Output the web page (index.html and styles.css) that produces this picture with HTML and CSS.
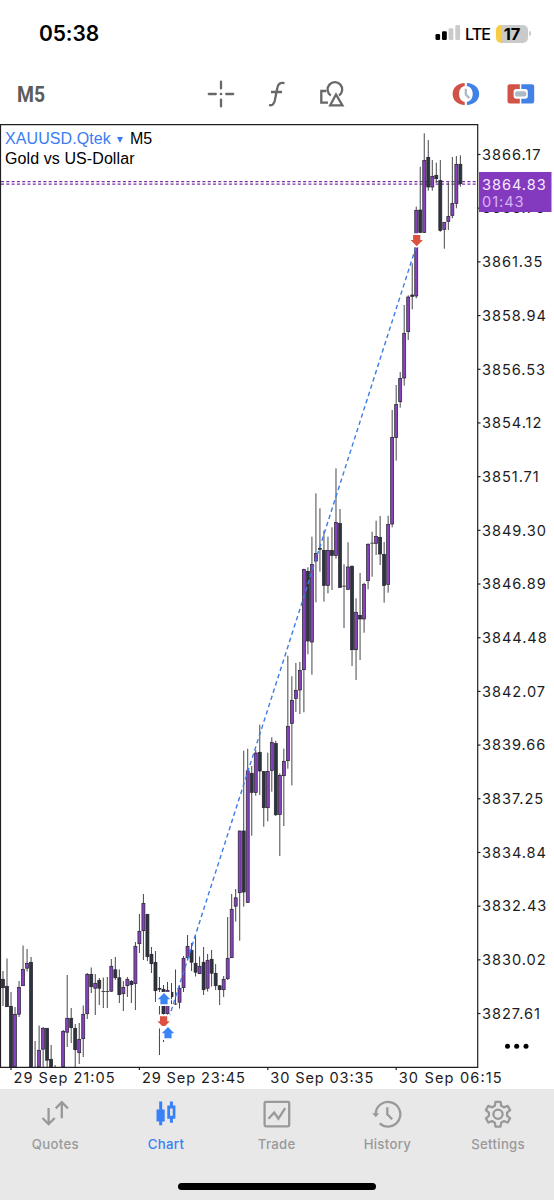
FILE: index.html
```html
<!DOCTYPE html>
<html lang="en">
<head>
<meta charset="utf-8">
<title>XAUUSD M5 chart</title>
<link rel="stylesheet" href="styles.css">
</head>
<body>
<div class="screen">
  <header class="status">
    <div class="clock">05:38</div>
    <div class="indicators">
      <svg class="signal" width="26" height="16" viewBox="0 0 26 16">
        <rect x="0.5" y="9" width="4.6" height="6" rx="1.3"/>
        <rect x="7" y="6.3" width="4.8" height="8.7" rx="1.3"/>
        <rect class="weak" x="13.6" y="3.3" width="4.8" height="11.7" rx="1.3"/>
        <rect class="weak" x="20.3" y="0" width="4.8" height="15" rx="1.3"/>
      </svg>
      <span class="network">LTE</span>
      <span class="battery"><b>17</b></span><i class="battery-tip"></i>
    </div>
  </header>

  <div class="toolbar">
    <div class="timeframe">M5</div>
    <svg class="tool cross" width="28" height="28" viewBox="0 0 28 28">
      <path d="M14 1.6V8.4M14 19.6V26.4M1.8 14H8.8M19.2 14H26.2" stroke-linecap="round"/>
      <circle class="dot" cx="14" cy="14" r="1.3"/>
    </svg>
    <svg class="tool func" width="20" height="28" viewBox="0 0 20 28">
      <path d="M2 25C5.5 26 7 24 7.8 20.5L10.3 8C11 4 13 2.2 17.5 3.2M4 12H15"/>
    </svg>
    <svg class="tool shapes" width="28" height="28" viewBox="0 0 28 28">
      <path d="M8.3 11H3.3V22.7H10M12.8 15.5A7.3 7.3 0 1 1 21 15.5M18 14.5L12.2 25.3H24.4Z"/>
    </svg>
    <svg class="tool session" width="28" height="24" viewBox="0 0 28 24">
      <path class="red" d="M12.7 1V4.1C8.5 5 7.1 8.5 7.1 12S8.5 19 12.7 19.9V23C5.5 22.6.6 18.4.6 12S5.5 1.4 12.7 1Z"/>
      <path class="blue" d="M14.9 1V4.1C19.1 5 20.7 8.5 20.7 12S19.1 19 14.9 19.9V23C22 22.6 27.2 18.4 27.2 12S22 1.4 14.9 1Z"/>
      <path class="hands" d="M13.8 6.8V12.5L17.4 16.1"/>
    </svg>
    <svg class="tool trade-toggle" width="28" height="20" viewBox="0 0 28 20">
      <path class="red" d="M2.8.2H12.8V5H9.3Q6.6 5 6.6 7.7V12Q6.6 14.7 9.3 14.7H12.8V19.5H2.8Q.5 19.5.5 17.2V2.5Q.5.2 2.8.2Z"/>
      <path class="blue" d="M14.3.2H25Q27.2.2 27.2 2.5V17.2Q27.2 19.5 25 19.5H14.3V14.7H18.1Q20.8 14.7 20.8 12V7.7Q20.8 5 18.1 5H14.3Z"/>
      <rect class="pill" x="8" y="7.2" width="11.4" height="5.3" rx="2.6"/>
    </svg>
  </div>

  <main class="chart">
    <svg id="plot" width="554" height="965" viewBox="0 124 554 965"></svg>
    <div class="heading">
      <div><span class="symbol">XAUUSD.Qtek</span><i class="caret"></i>M5</div>
      <div>Gold vs US-Dollar</div>
    </div>
  </main>

  <nav class="tabs">
    <div class="tab">
      <svg width="30" height="30" viewBox="0 0 30 30"><path d="M8.6 8V24M2.5 18L8.6 24.2L14.7 18M21.8 18.2V2.4M15.7 8.4L21.8 2.2L27.9 8.4"/></svg>
      <span>Quotes</span>
    </div>
    <div class="tab active">
      <svg width="30" height="30" viewBox="0 0 30 30"><path class="fill" d="M8.2 1.5H11.2V9.5H13.7V21.5H11.2V25.3H8.2V21.5H5.5V9.5H8.2ZM18.9 1.5H21.9V5.5H24.4V18.7H21.9V22.8H18.9V18.7H16.3V5.5H18.9ZM19.1 8.5V15.8H21.7V8.5Z"/></svg>
      <span>Chart</span>
    </div>
    <div class="tab">
      <svg width="30" height="30" viewBox="0 0 30 30"><rect x="2.6" y="1.9" width="24.6" height="24.4" rx="1.2"/><path d="M6.4 18.7L12.2 12.6L16.4 18.6L23.2 8.2"/></svg>
      <span>Trade</span>
    </div>
    <div class="tab">
      <svg width="30" height="30" viewBox="0 0 30 30"><path d="M3.7 14A12.3 12.3 0 1 1 7.7 23.3M15.3 7.3V14.3L20.2 19.3"/><path class="fill" d="M.2 13.3H7.2L3.8 17.3Z"/></svg>
      <span>History</span>
    </div>
    <div class="tab">
      <svg width="30" height="30" viewBox="0 0 30 30"><path stroke-linejoin="round" d="M12.5 1.8H17.5L18.2 5.7L20.9 7.3L24.7 5.9L27.1 10.1L24.1 12.6V15.8L27.1 18.3L24.7 22.5L20.9 21.1L18.2 22.7L17.5 26.6H12.5L11.8 22.7L9.1 21.1L5.3 22.5L2.9 18.3L5.9 15.8V12.6L2.9 10.1L5.3 5.9L9.1 7.3L11.8 5.7Z"/><circle cx="15" cy="14.2" r="4.6"/></svg>
      <span>Settings</span>
    </div>
  </nav>
  <footer class="home"><i></i></footer>
</div>
<script src="chart.js"></script>
</body>
</html>
```
FILE: styles.css
```css
* { box-sizing: border-box; }
body { margin: 0; background: #fff; font-family: Inter, "Liberation Sans", sans-serif; color: #000; }
.screen { width: 554px; height: 1200px; display: flex; flex-direction: column; overflow: hidden; }

.status { height: 64px; flex: none; display: flex; justify-content: space-between; align-items: center; padding: 3px 23px 0 39px; }
.clock { font-size: 21px; font-weight: 600; letter-spacing: -0.1px; }
.indicators { display: flex; align-items: center; }
.signal { margin-top: -1px; }
.signal .weak { fill: #cbcbcb; }
.network { font-size: 16.2px; font-weight: 500; letter-spacing: -1px; margin: 0 6px 0 4px; }
.battery { width: 32px; height: 18px; border-radius: 5px; background: linear-gradient(90deg, #f5ce46 5px, #cacaca 5px); display: flex; align-items: center; justify-content: center; font-size: 16.5px; }
.battery b { font-weight: 700; letter-spacing: -0.2px; }
.battery-tip { width: 2px; height: 5px; margin-left: 1px; border-radius: 0 2px 2px 0; background: #cacaca; }

.toolbar { height: 60px; flex: none; display: flex; align-items: center; padding-left: 17px; }
.timeframe { width: 190px; font: 700 22.5px Roboto, sans-serif; color: #5c5c5c; transform: scaleX(.86); transform-origin: 0 50%; }
.tool { flex: none; fill: none; stroke: #686868; stroke-width: 2.3; }
.cross .dot { fill: #686868; stroke: none; }
.func { margin-left: 32px; }
.shapes { margin-left: 31px; }
.session { margin-left: 106px; }
.trade-toggle { margin-left: 27px; }
.red { fill: #d15246; stroke: none; }
.blue { fill: #4282e7; stroke: none; }
.hands { stroke: #adb9c3; }
.pill { fill: #adb9c3; stroke: none; }

.chart { height: 965px; flex: none; display: grid; }
.chart > * { grid-area: 1 / 1; }
#plot { display: block; }
.heading { padding: 4.5px 0 0 5px; font: 16px/20px "Liberation Sans", Arial, sans-serif; letter-spacing: .09px; }
.symbol { color: #3a7df0; }
.caret { display: inline-block; border: 3.5px solid transparent; border-top: 6px solid #3a7df0; border-bottom: 0; margin: 0 6.5px 1px; }

.frame { fill: none; stroke: #202024; stroke-width: 1.2; }
.bid { stroke: #7d32a8; stroke-width: 1.2; stroke-dasharray: 3 2.3; }
.wick { stroke: #47474a; stroke-width: 1; }
.candle { stroke: #25212e; stroke-width: .7; }
.up { fill: #8542bc; }
.down { fill: #2d343d; }
.deal { stroke: #3f7ce6; stroke-width: 1.4; stroke-dasharray: 4.4 3.2; }
.buy { fill: #3985f3; stroke: #fff; stroke-width: 2; paint-order: stroke; }
.sell { fill: #dc5140; stroke: #fff; stroke-width: 2; paint-order: stroke; }
.axis { font: 14.6px Inter, sans-serif; fill: #1c1c1e; }
.price { letter-spacing: .95px; }
.badge { fill: #833abf; }
.badge-price { fill: #f8e8ff; }
.badge-time { fill: #dbb0f5; }

.tabs { height: 72px; flex: none; display: grid; grid-template-columns: repeat(5, 110.7px); background: #e8e8e8; padding-top: 11px; }
.tab { display: flex; flex-direction: column; align-items: center; gap: 6px; color: #999; font-size: 13.2px; line-height: 17px; font-weight: 500; letter-spacing: .3px; }
.tab svg { fill: none; stroke: currentColor; stroke-width: 2.3; }
.tab .fill { fill: currentColor; stroke: none; fill-rule: evenodd; }
.tab.active { color: #3880f5; }
.home { height: 39px; flex: none; background: #e8e8e8; display: flex; justify-content: center; align-items: flex-start; padding-top: 22px; }
.home i { width: 198px; height: 7px; border-radius: 4px; background: #000; }
```
FILE: chart.js
```js
// Each candle: [slot, direction, high, bodyTop, bodyBottom, low]
const candles = [
[0,'d',971,979,988,1006],[1,'d',958.5,986,1007,1007],[2,'d',992,1006,1067,1067],[3,'u',1007,1014,1067,1067],
[4,'u',981,987,1014.5,1017],[5,'u',945.5,969,986,986],[6,'u',949,963,968.5,971.5],[7,'d',957,962,1067,1067],
[8,'d',1041,1067,1067,1067],[9,'u',1025.5,1050,1067,1067],[10,'u',1027,1028,1049.5,1067],[11,'d',1028,1028,1060.5,1067],
[12,'d',1045,1059,1067,1067],[13,'d',1065,1067,1067,1067],[15,'u',1030,1031,1067,1067],[16,'u',975,1018,1032.5,1047],
[17,'d',1008,1018,1028,1043],[18,'d',1024,1028,1050,1067],[19,'u',1023,1039,1053,1064],[20,'u',1005.5,1014,1039,1057],
[21,'u',973,974,1014,1019],[22,'d',967.5,974,987,993],[23,'u',974,983,988.5,1015],[24,'d',978,980,988.5,1005],
[25,'d',977.5,991.5,992,1008],[26,'d',977,991.5,992,1008],[27,'u',959,966,991.5,992],[28,'d',957,969.5,978,980],
[29,'d',969.5,977.5,995,1003],[30,'u',981,987,994,1011],[31,'u',977,979,986,997],[32,'d',980,981,985,1003],
[33,'u',942,946,984,1010],[34,'u',914,931,944,953],[35,'u',894,903,931,960],[36,'d',914,914,957,961],
[37,'d',947,954,964,973],[38,'d',951,962,991,1002],[39,'d',977,988,989.5,1055],[40,'d',985,989,1014,1042],
[41,'u',982,990,1014,1018],[42,'d',983,992,997,1004],[43,'d',969.5,1004,1004.5,1005],[44,'u',985,988,1002.5,1008.5],
[45,'u',956,958,988,992],[46,'u',935,946,958,959],[47,'d',943,950,962.5,971],[48,'d',936,963,972.5,976.5],
[49,'u',956.5,966,974,974],[50,'d',947,962,990,995],[51,'u',954,960,988.5,991.5],[52,'d',950,959,973.5,986.5],
[53,'d',964,973,986,990],[54,'d',985,985.5,990,1005],[55,'u',976,979,990,997],[56,'u',917,958,979,980],
[57,'u',894,909,958,958],[58,'u',889,897.5,906.5,921.5],[59,'u',830.7,830.7,893,940.7],[60,'d',750.7,830.7,892.3,906.7],
[61,'u',748.7,770.5,902.7,903],[62,'d',766,773,792.7,835.7],[63,'u',750,752.7,792.7,795.7],[64,'d',724.7,752,771.3,795],
[65,'d',771,771.3,808,826.7],[66,'u',752.7,771.3,808,821.3],[67,'u',737.3,742.3,770.7,791.7],[68,'d',740.7,743.3,815,816],
[69,'u',773.3,775.3,814.7,856],[70,'u',748.7,761,776,826],[71,'u',655.7,726,761,768.7],[72,'u',676.3,700,723.7,785.3],
[73,'u',663,690.3,698.7,712],[74,'u',662,670.3,690.3,714],[75,'u',568.7,569.3,670,712.3],[76,'d',567.3,571,641.3,654.3],
[77,'u',536.7,564.3,642.3,674.7],[78,'u',493.3,553.3,561.3,602.3],[79,'d',508.3,548.3,549.6,571.7],[80,'d',530.7,550,585.7,601.7],
[81,'u',536.7,550.3,585.7,593.3],[82,'d',527.3,550.3,555.7,590],[83,'u',468.3,522.3,555.7,558.7],[84,'d',509,523.3,587.7,587.7],
[85,'d',564.3,586.2,586.7,628],[86,'u',542.3,566.7,589.7,590],[87,'d',565.3,566,650,666],[88,'u',598.3,612,650,680],
[89,'d',573,615,619.3,660],[90,'u',582.7,584,619.3,632.7],[91,'u',543.3,544,581,589.3],[92,'d',531.7,543.2,543.7,576.7],
[93,'u',520.7,536.3,543.7,555],[94,'d',516,537,554.3,565],[95,'d',542,554.3,585.7,602.7],[96,'u',515.7,524.3,584.7,592.7],
[97,'u',410,437,524.3,527.3],[98,'u',385,404.3,437.7,460.7],[99,'u',372,378.3,402,407.7],[100,'u',305,333,378.3,385.7],
[101,'u',295.3,296.7,332,340],[102,'d',263.3,294.7,296.7,309.3],[103,'u',206.7,210,296.3,298.3],[104,'d',166.7,209.7,232.7,233],
[105,'u',133.3,160.3,232.7,233],[106,'d',140,157,187.3,190.7],[107,'u',160,176,187.3,190.7],[108,'d',162.7,175,179,183],
[109,'d',160,180.3,230.7,231.7],[110,'u',222,222,229.7,248.7],[111,'u',182.3,216.3,221.7,230],[112,'u',157,203.3,215.7,218.3],
[113,'u',156,164,203.7,208.3],[114,'d',155.3,164,184,186.7]
];

const parts = [];
const dateText = (x, y, width, label) =>
  `<text class="axis" x="${x}" y="${y}" textLength="${width}">${label}</text>`;
const priceText = (x, y, label, cls = '') =>
  `<text class="axis price ${cls}" x="${x}" y="${y}">${label}</text>`;

parts.push('<path class="bid" d="M1 181.6H477M1 184.2H477"/>');

for (const [slot, dir, high, top, bottom, low] of candles) {
  const x = 3 + slot * 4.012;
  parts.push(`<path class="wick" d="M${x} ${high}V${low}"/>`);
  if (bottom - top >= 1) {
    parts.push(`<rect class="candle ${dir === 'u' ? 'up' : 'down'}" x="${x - 1.5}" y="${top + 0.3}" width="3" height="${bottom - top - 0.6}"/>`);
  } else if (bottom > top) {
    parts.push(`<path class="wick" d="M${x - 1.8} ${top}H${x + 1.8}"/>`);
  }
}

parts.push('<path class="deal" d="M416 247L165 1030"/>');

// Deal markers sit on a white backing so they stay legible over candles
const arrow = (x, y, up) => {
  const s = up ? 1 : -1;
  return `<rect x="${x - 7}" y="${y - 7}" width="14" height="14" fill="#fff"/>` +
    `<path class="${up ? 'buy' : 'sell'}" transform="translate(${x} ${y}) scale(1 ${s})" d="M0-6L6.2.3H3.6V5.3H-3.6V.3H-6.2Z"/>`;
};
parts.push(arrow(416.7, 240.3, false), arrow(164, 999, true), arrow(163.6, 1021.5, false), arrow(168, 1033, true));

parts.push('<path class="frame" d="M.5 1067V124.7H477.7V1067.3H0"/>');

for (let i = 0; i < 17; i++) {
  const y = 154.5 + i * 53.69;
  parts.push(`<path class="frame" d="M478 ${y}H480.5"/>`);
  parts.push(priceText(482, y + 5.3, (3866.17 - i * 2.41).toFixed(2)));
}
['29 Sep 21:05', '29 Sep 23:45', '30 Sep 03:35', '30 Sep 06:15'].forEach((label, i) => {
  const x = 11 + i * 128.4;
  parts.push(`<path class="frame" d="M${x} 1067V1070"/>`);
  parts.push(dateText(x + 2.5, 1082.6, i ? 103 : 101, label));
});

parts.push('<rect class="badge" x="479" y="172" width="72.5" height="40"/>');
parts.push(priceText(482, 189.5, '3864.83', 'badge-price'), priceText(482, 207, '01:43', 'badge-time'));
parts.push('<circle cx="507.5" cy="1046.3" r="2.5"/><circle cx="516.7" cy="1046.3" r="2.5"/><circle cx="526" cy="1046.3" r="2.5"/>');

document.getElementById('plot').innerHTML = parts.join('');
```
